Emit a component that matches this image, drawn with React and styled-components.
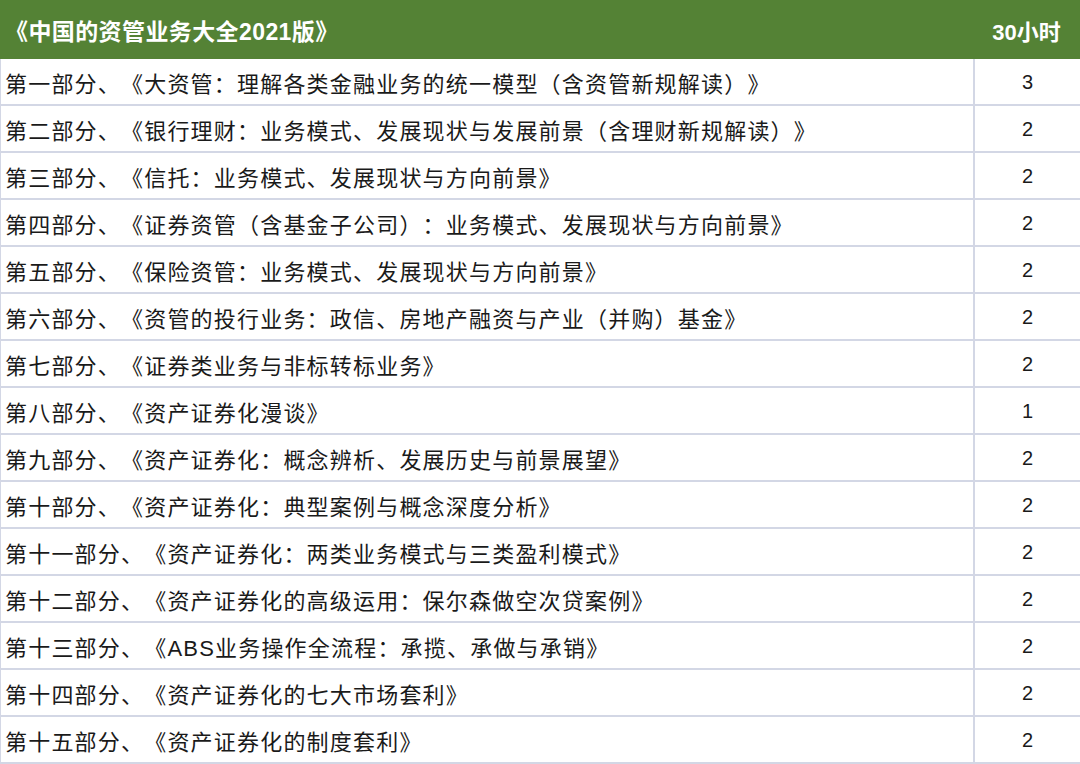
import React from "react";
import styled, { createGlobalStyle } from "styled-components";

const GlobalStyle = createGlobalStyle`
  html, body {
    margin: 0;
    padding: 0;
    background: #fff;
  }
  body {
    font-family: "Liberation Sans", "Noto Sans CJK SC", sans-serif;
    text-spacing-trim: space-all;
  }
`;

const rows = [
  ["第一部分、《大资管：理解各类金融业务的统一模型（含资管新规解读）》", 3],
  ["第二部分、《银行理财：业务模式、发展现状与发展前景（含理财新规解读）》", 2],
  ["第三部分、《信托：业务模式、发展现状与方向前景》", 2],
  ["第四部分、《证券资管（含基金子公司）：业务模式、发展现状与方向前景》", 2],
  ["第五部分、《保险资管：业务模式、发展现状与方向前景》", 2],
  ["第六部分、《资管的投行业务：政信、房地产融资与产业（并购）基金》", 2],
  ["第七部分、《证券类业务与非标转标业务》", 2],
  ["第八部分、《资产证券化漫谈》", 1],
  ["第九部分、《资产证券化：概念辨析、发展历史与前景展望》", 2],
  ["第十部分、《资产证券化：典型案例与概念深度分析》", 2],
  ["第十一部分、《资产证券化：两类业务模式与三类盈利模式》", 2],
  ["第十二部分、《资产证券化的高级运用：保尔森做空次贷案例》", 2],
  ["第十三部分、《ABS业务操作全流程：承揽、承做与承销》", 2],
  ["第十四部分、《资产证券化的七大市场套利》", 2],
  ["第十五部分、《资产证券化的制度套利》", 2],
];

const Table = styled.div`
  display: grid;
  grid-template-columns: 1fr 107px;
  width: 1080px;
  border-left: 1px solid #d3d7e5;
  box-sizing: border-box;
`;

const HeadCell = styled.div`
  height: 59px;
  background: #548235;
  color: #fff;
  font-weight: bold;
  font-size: ${(p) => (p.$center ? "22px" : "23px")};
  display: flex;
  align-items: center;
  justify-content: ${(p) => (p.$center ? "center" : "flex-start")};
  padding: ${(p) => (p.$center ? "0" : "0 0 0 5px")};
  letter-spacing: ${(p) => (p.$center ? "0" : "0.4px")};
  margin-left: ${(p) => (p.$center ? "0" : "-1px")};
  text-spacing-trim: space-all;
`;

const Cell = styled.div`
  height: 47px;
  border-bottom: 2px solid #d3d7e5;
  border-left: ${(p) => (p.$num ? "2px solid #d3d7e5" : "none")};
  display: flex;
  align-items: center;
  justify-content: ${(p) => (p.$num ? "center" : "flex-start")};
  padding-left: ${(p) => (p.$num ? "0" : "4px")};
  padding-top: 1px;
  box-sizing: border-box;
  color: #1a1a1a;
  font-size: ${(p) => (p.$num ? "20px" : "22px")};
  letter-spacing: ${(p) => (p.$num ? "0" : "1.2px")};
  white-space: nowrap;
  text-spacing-trim: space-all;
`;

export default function App() {
  return (
    <>
      <GlobalStyle />
      <Table>
        <HeadCell>《中国的资管业务大全2021版》</HeadCell>
        <HeadCell $center>30小时</HeadCell>
        {rows.map(([title, hours]) => (
          <React.Fragment key={title}>
            <Cell>{title}</Cell>
            <Cell $num>{hours}</Cell>
          </React.Fragment>
        ))}
      </Table>
    </>
  );
}
